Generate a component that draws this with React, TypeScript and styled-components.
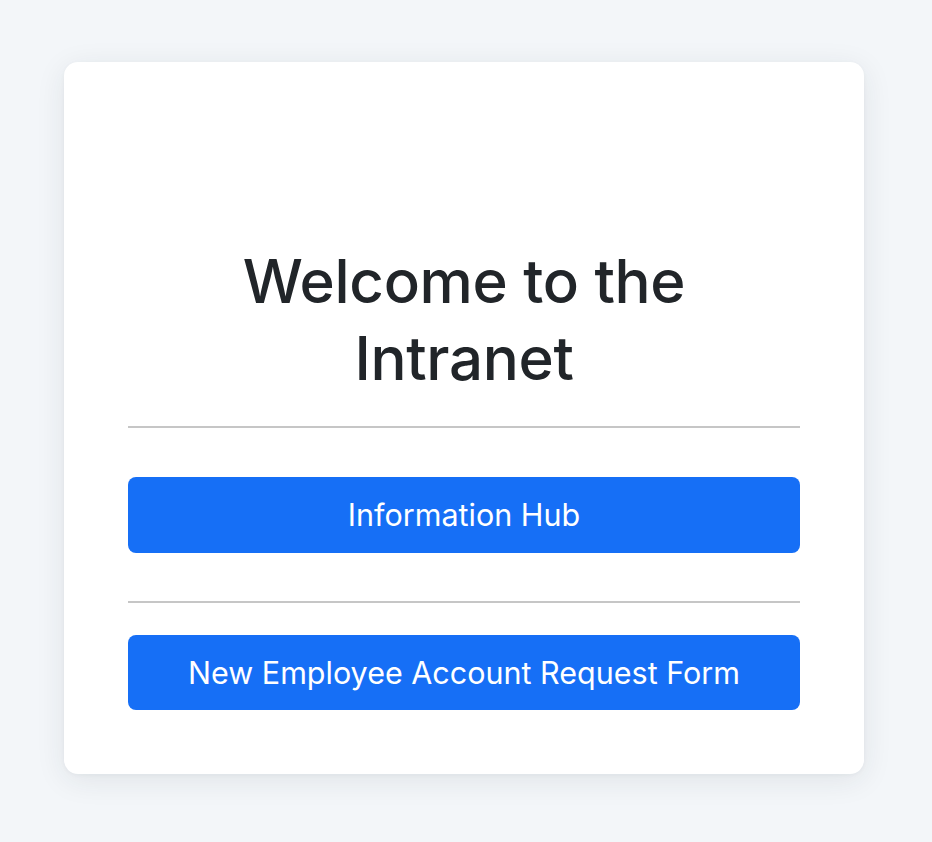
import React, { FC } from 'react';
import styled, { createGlobalStyle } from 'styled-components';

const GlobalStyle = createGlobalStyle`
  html, body {
    margin: 0;
    padding: 0;
    background: #f3f6f9;
    font-family: Inter, "Open Sans", "Liberation Sans", sans-serif;
    color: #212529;
  }
  * {
    box-sizing: border-box;
  }
`;

const Page = styled.div`
  min-height: 842px;
  padding: 62px 68px 68px 64px;
`;

const Card = styled.div`
  width: 800px;
  height: 712px;
  background: #ffffff;
  border-radius: 14px;
  box-shadow: 0 6px 30px rgba(30, 40, 60, 0.09), 0 1px 4px rgba(30, 40, 60, 0.04);
  padding: 181px 64px 64px;
  display: flex;
  flex-direction: column;
`;

const Title = styled.h1`
  margin: 0;
  font-size: 60px;
  font-weight: 500;
  line-height: 77px;
  text-align: center;
  letter-spacing: -0.3px;
  color: #212529;
`;

const Divider = styled.hr<{ above: number; below: number }>`
  margin: ${({ above, below }) => `${above}px 0 ${below}px`};
  border: 0;
  border-top: 2px solid #c6c6c6;
  height: 0;
`;

const LinkButton = styled.a`
  display: flex;
  align-items: center;
  justify-content: center;
  height: 76px;
  border-radius: 8px;
  background: #166ff6;
  color: #ffffff;
  font-size: 30.5px;
  font-weight: 400;
  text-decoration: none;
  cursor: pointer;
`;

const App: FC = () => (
  <>
    <GlobalStyle />
    <Page>
      <Card>
        <Title>
          Welcome to the
          <br />
          Intranet
        </Title>
        <Divider above={29} below={49} />
        <LinkButton href="#">Information Hub</LinkButton>
        <Divider above={48} below={32} />
        <LinkButton href="#">New Employee Account Request Form</LinkButton>
      </Card>
    </Page>
  </>
);

export default App;
